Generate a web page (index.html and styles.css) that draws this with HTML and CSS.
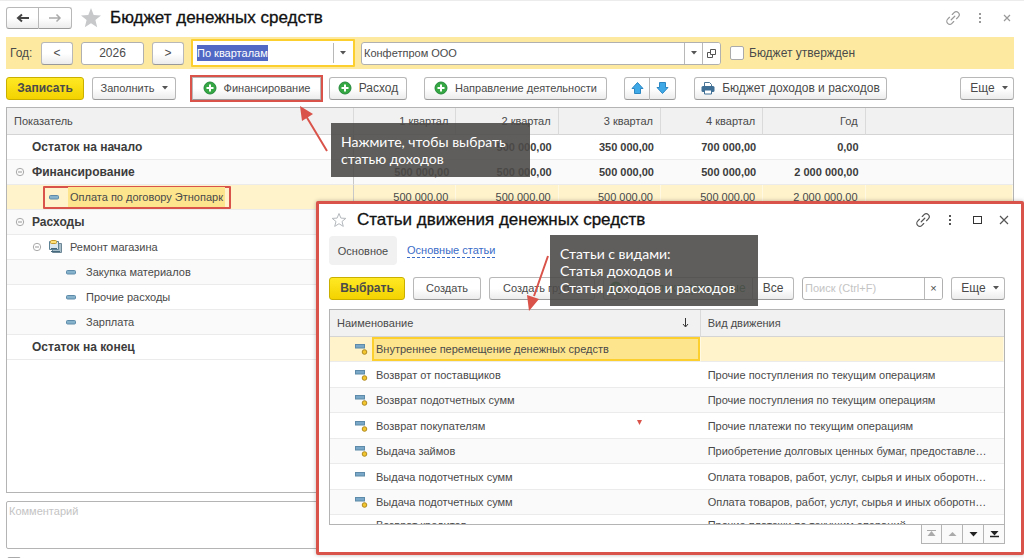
FILE: index.html
```html
<!DOCTYPE html>
<html lang="ru">
<head>
<meta charset="utf-8">
<title>Бюджет денежных средств</title>
<link rel="stylesheet" href="styles.css">
</head>
<body>
<svg class="defs" aria-hidden="true">
  <symbol id="plus" viewBox="0 0 14 14"><circle cx="7" cy="7" r="6" fill="#35a844" stroke="#24883a"/><path d="M7 3.500v7M3.500 7h7" stroke="#fff" stroke-width="2"/></symbol>
  <symbol id="link" viewBox="0 0 16 16"><g transform="rotate(-45 8 8)" fill="none" stroke="currentColor" stroke-width="1.200" stroke-linecap="round"><path d="M6 5H3.500a3 3 0 0 0 0 6H6M10 5h2.500a3 3 0 0 1 0 6H10M5.500 8h5"/></g></symbol>
  <symbol id="dots" viewBox="0 0 16 16"><path d="M7 3h2v2H7zM7 7h2v2H7zM7 11h2v2H7z" fill="currentColor"/></symbol>
  <symbol id="cross" viewBox="0 0 16 16"><path d="M4 4l8 8M12 4l-8 8" stroke="currentColor" stroke-width="1.200" fill="none"/></symbol>
  <symbol id="cross-sm" viewBox="0 0 16 16"><path d="M5 5l6 6M11 5l-6 6" stroke="currentColor" stroke-width="1.200" fill="none"/></symbol>
  <symbol id="caret" viewBox="0 0 6 4"><path d="M0 0h6L3 3.500z" fill="#555"/></symbol>
  <symbol id="fold" viewBox="0 0 10 10"><circle cx="5" cy="5" r="3.700" fill="none" stroke="#aaa"/><path d="M3 5h4" stroke="#999"/></symbol>
  <symbol id="dash" viewBox="0 0 10 12"><rect x=".5" y="4.500" width="9" height="3.500" rx="1" fill="#86b2cc" stroke="#5d8aa8"/></symbol>
  <symbol id="item" viewBox="0 0 13 12"><rect x=".5" y="1.500" width="9" height="3.500" fill="#78a7c8" stroke="#5d8aa8"/></symbol>
  <symbol id="itemdot" viewBox="0 0 13 12"><rect x=".5" y="1.500" width="9" height="3.500" fill="#78a7c8" stroke="#5d8aa8"/><circle cx="9.500" cy="9" r="2.300" fill="#f2c52e" stroke="#b08a20"/></symbol>
</svg>

<header class="head">
  <div class="nav">
    <button class="btn nav-btn" aria-label="Назад"><svg width="14" height="10" viewBox="0 0 14 10"><path d="M13 5H3M6 1.500 2 5l4 3.500" fill="none" stroke="#444" stroke-width="2"/></svg></button>
    <button class="btn nav-btn" aria-label="Вперед"><svg width="14" height="10" viewBox="0 0 14 10"><path d="M1 5h11M8.500 1.500 12 5 8.500 8.500" fill="none" stroke="#aaa" stroke-width="1.500"/></svg></button>
  </div>
  <svg class="star" viewBox="0 0 20 20"><path d="M10 0l2.700 6.900 7.300.5-5.600 4.700 1.800 7.200L10 15.300l-6.200 4 1.800-7.200L0 7.400l7.300-.5z" fill="#c6c8ca"/></svg>
  <h1 class="title">Бюджет денежных средств</h1>
  <div class="win-icons win-icons-main">
    <svg><use href="#link"/></svg><svg><use href="#dots"/></svg><svg><use href="#cross-sm"/></svg>
  </div>
</header>

<form class="params">
  <label class="year-label" for="year">Год:</label>
  <button type="button" class="btn step">&lt;</button>
  <input id="year" class="field year" value="2026">
  <button type="button" class="btn step">&gt;</button>
  <div class="combo combo-active">
    <input class="combo-input" aria-label="Период" value="По кварталам" autofocus onfocus="this.select()">
    <button type="button" class="combo-btn" aria-label="Выбрать период"><svg class="caret"><use href="#caret"/></svg></button>
  </div>
  <div class="combo company">
    <input class="combo-input" aria-label="Организация" value="Конфетпром ООО">
    <button type="button" class="combo-btn" aria-label="Выбрать организацию"><svg class="caret"><use href="#caret"/></svg></button>
    <button type="button" class="combo-btn" aria-label="Открыть"><svg width="9" height="9" viewBox="0 0 9 9"><path d="M3.500.5h5v5h-5zM3.500 3.500h-3v5h5v-3" fill="none" stroke="#555"/></svg></button>
  </div>
  <label class="check-label"><input type="checkbox" class="check">Бюджет утвержден</label>
</form>

<div class="tools">
  <button class="btn primary w-save">Записать</button>
  <button class="btn w-fill">Заполнить <svg class="caret"><use href="#caret"/></svg></button>
  <button class="btn w-fin marked"><svg class="ico"><use href="#plus"/></svg>Финансирование</button>
  <button class="btn w-exp"><svg class="ico"><use href="#plus"/></svg>Расход</button>
  <button class="btn w-dir"><svg class="ico"><use href="#plus"/></svg>Направление деятельности</button>
  <div class="pair">
    <button class="btn arrow-btn" aria-label="Вверх"><svg width="13" height="12" viewBox="0 0 13 12"><path d="M6.500.5 12 6.500H9.500v5h-6v-5H1z" fill="#3fa9e8" stroke="#2b86c2"/></svg></button>
    <button class="btn arrow-btn" aria-label="Вниз"><svg width="13" height="12" viewBox="0 0 13 12"><path d="M6.500 11.500 12 5.500H9.500v-5h-6v5H1z" fill="#3fa9e8" stroke="#2b86c2"/></svg></button>
  </div>
  <button class="btn w-rep"><svg class="ico" viewBox="0 0 14 14"><path d="M3.500 6V1.500h5l2 2V6" fill="#fff" stroke="#4b7696"/><rect x=".5" y="5" width="13" height="6" rx="1.500" fill="#3f6f94"/><path d="M3.500 9h7v4h-7z" fill="#fff" stroke="#3f6f94"/></svg>Бюджет доходов и расходов</button>
  <button class="btn more push">Еще <svg class="caret"><use href="#caret"/></svg></button>
</div>

<main class="pane">
  <table class="budget">
    <colgroup><col class="c-name"><col class="c-num"><col class="c-num"><col class="c-num"><col class="c-num"><col class="c-num"><col></colgroup>
    <thead><tr><th>Показатель</th><th>1 квартал</th><th>2 квартал</th><th>3 квартал</th><th>4 квартал</th><th>Год</th><th></th></tr></thead>
    <tbody>
      <tr class="bold"><td><div class="cell"><span class="slot"></span>Остаток на начало</div></td><td></td><td>500 000,00</td><td>350 000,00</td><td>700 000,00</td><td>0,00</td><td></td></tr>
      <tr class="bold alt"><td><div class="cell"><span class="slot"><svg class="fold"><use href="#fold"/></svg></span>Финансирование</div></td><td>500 000,00</td><td>500 000,00</td><td>500 000,00</td><td>500 000,00</td><td>2 000 000,00</td><td></td></tr>
      <tr class="current"><td><div class="cell"><span class="frame"><svg class="dash"><use href="#dash"/></svg><span class="hl">Оплата по договору Этнопарк</span></span></div></td><td>500 000,00</td><td>500 000,00</td><td>500 000,00</td><td>500 000,00</td><td>2 000 000,00</td><td></td></tr>
      <tr class="bold alt"><td><div class="cell"><span class="slot"><svg class="fold"><use href="#fold"/></svg></span>Расходы</div></td><td></td><td></td><td></td><td></td><td></td><td></td></tr>
      <tr><td><div class="cell level1"><span class="slot-sm"><svg class="fold"><use href="#fold"/></svg></span><svg class="folder" viewBox="0 0 13 14"><path d="M3.500 3.500h9v9h-9z" fill="#a9bfca" stroke="#6d8796"/><path d="M.5 1.500h9v8h-9z" fill="#dbe8ee" stroke="#5d8296"/><path d="M2 8.500h6M2 11.500h9" stroke="#47697d"/><rect x="1.500" y=".5" width="6" height="3" rx="1" fill="#ffe27a" stroke="#c59b2c"/></svg>Ремонт магазина</div></td><td></td><td></td><td></td><td></td><td></td><td></td></tr>
      <tr class="alt"><td><div class="cell level2"><svg class="dash"><use href="#dash"/></svg>Закупка материалов</div></td><td></td><td></td><td></td><td></td><td></td><td></td></tr>
      <tr><td><div class="cell level2"><svg class="dash"><use href="#dash"/></svg>Прочие расходы</div></td><td></td><td></td><td></td><td></td><td></td><td></td></tr>
      <tr class="alt"><td><div class="cell level2"><svg class="dash"><use href="#dash"/></svg>Зарплата</div></td><td></td><td></td><td></td><td></td><td></td><td></td></tr>
      <tr class="bold"><td><div class="cell"><span class="slot"></span>Остаток на конец</div></td><td></td><td></td><td></td><td></td><td></td><td></td></tr>
    </tbody>
  </table>
</main>
<textarea class="comment" aria-label="Комментарий" placeholder="Комментарий"></textarea>
<input type="checkbox" class="check tail" aria-label="Флажок">

<section class="dialog" role="dialog" aria-labelledby="dlg-title">
  <header class="dlg-head">
    <svg class="star-sm" viewBox="0 0 16 16"><path d="M8 1.500l1.900 4.600 4.900.3-3.800 3.100 1.300 4.900L8 11.700l-4.300 2.700L5 9.500 1.200 6.400l4.900-.3z" fill="none" stroke="#b4b8bc"/></svg>
    <h2 class="title" id="dlg-title">Статьи движения денежных средств</h2>
    <div class="win-icons">
      <svg><use href="#link"/></svg><svg><use href="#dots"/></svg><svg viewBox="0 0 16 16"><rect x="4.500" y="4.500" width="8" height="7" fill="none" stroke="#333"/></svg><svg><use href="#cross"/></svg>
    </div>
  </header>
  <nav class="tabs"><button class="tab">Основное</button><a class="tab-link" href="#">Основные статьи</a></nav>
  <div class="dlg-tools">
    <button class="btn primary w-pick">Выбрать</button>
    <button class="btn w-new">Создать</button>
    <button class="btn w-group">Создать группу</button>
    <button class="btn w-copy" aria-label="Скопировать"><svg class="ico"><use href="#plus"/></svg></button>
    <div class="pair filter"><button class="btn w-only">Только доступные</button><button class="btn w-all">Все</button></div>
    <div class="combo search"><input class="combo-input" aria-label="Поиск" placeholder="Поиск (Ctrl+F)"><button class="combo-btn" aria-label="Очистить">×</button></div>
    <button class="btn more">Еще <svg class="caret"><use href="#caret"/></svg></button>
  </div>
  <div class="list">
    <table class="items">
      <colgroup><col class="c-item"><col></colgroup>
      <thead><tr><th><div class="th-sort">Наименование<svg width="7" height="10" viewBox="0 0 7 10"><path d="M3.500 0v8.500M1 6l2.500 3L6 6" fill="none" stroke="#333"/></svg></div></th><th>Вид движения</th></tr></thead>
      <tbody>
        <tr class="current"><td><div class="item"><svg><use href="#itemdot"/></svg><span class="picked">Внутреннее перемещение денежных средств</span></div></td><td></td></tr>
        <tr><td><div class="item"><svg><use href="#itemdot"/></svg><span>Возврат от поставщиков</span></div></td><td>Прочие поступления по текущим операциям</td></tr>
        <tr><td><div class="item"><svg><use href="#itemdot"/></svg><span>Возврат подотчетных сумм</span></div></td><td>Прочие поступления по текущим операциям</td></tr>
        <tr><td><div class="item"><svg><use href="#itemdot"/></svg><span>Возврат покупателям</span></div></td><td>Прочие платежи по текущим операциям</td></tr>
        <tr><td><div class="item"><svg><use href="#itemdot"/></svg><span>Выдача займов</span></div></td><td>Приобретение долговых ценных бумаг, предоставле…</td></tr>
        <tr><td><div class="item"><svg><use href="#item"/></svg><span>Выдача подотчетных сумм</span></div></td><td>Оплата товаров, работ, услуг, сырья и иных оборотн…</td></tr>
        <tr><td><div class="item"><svg><use href="#itemdot"/></svg><span>Выдача подотчетных сумм</span></div></td><td>Оплата товаров, работ, услуг, сырья и иных оборотн…</td></tr>
        <tr class="next"><td><div class="item"><span>Возврат кредитов</span></div></td><td>Прочие платежи по текущим операций</td></tr>
      </tbody>
    </table>
  </div>
  <div class="pager">
    <button aria-label="В начало"><svg width="9" height="8" viewBox="0 0 9 8"><path d="M0 .5h9" stroke="#aaa"/><path d="M4.500 1 8.500 6h-8z" fill="#aaa"/></svg></button>
    <button aria-label="Выше"><svg width="9" height="8" viewBox="0 0 9 8"><path d="M4.500 2 8.500 6h-8z" fill="#aaa"/></svg></button>
    <button aria-label="Ниже"><svg width="9" height="8" viewBox="0 0 9 8"><path d="M4.500 6.500 8.500 2h-8z" fill="#222"/></svg></button>
    <button aria-label="В конец"><svg width="9" height="8" viewBox="0 0 9 8"><path d="M4.500 5.500 8.500 1h-8z" fill="#222"/><path d="M0 6.500h9" stroke="#222" stroke-width="1.500"/></svg></button>
  </div>
</section>

<svg class="marks" aria-hidden="true">
  <path d="M327 151 306 116M548 256 534 296" stroke="#d9534a" stroke-width="2"/>
  <path d="M300 106 313 114 302 121zM529 311 527 295 539 299z" fill="#d9534a"/>
  <path d="M637 420h5l-2.500 5z" fill="#d9534a"/>
</svg>
<aside class="note note-a">Нажмите, чтобы выбрать<br>статью доходов</aside>
<aside class="note note-b">Статьи с видами:<br>Статья доходов и<br>Статья доходов и расходов</aside>
</body>
</html>
```
FILE: styles.css
```css
* { box-sizing: border-box; }

body {
  margin: 0;
  height: 100vh;
  overflow: hidden;
  display: flex;
  flex-direction: column;
  padding: 0 10px 0 6px;
  border-top: 1px solid #ececec;
  background: #fff;
  color: #4a4a4a;
  font: 12px/16px "Liberation Sans", Arial, sans-serif;
}

button, input, textarea { font: inherit; color: inherit; }
.defs { position: absolute; width: 0; height: 0; }

.btn {
  display: inline-flex;
  align-items: center;
  justify-content: center;
  gap: 7px;
  height: 23px;
  padding: 0;
  flex: none;
  border: 1px solid #b8b8b8;
  border-bottom-color: #999;
  border-radius: 3px;
  background: linear-gradient(#fff 50%, #ececec);
  white-space: nowrap;
}
.primary {
  border-color: #c9b000;
  background: linear-gradient(#ffe924, #f3d200);
  font-weight: bold;
}
.caret { width: 6px; height: 4px; }
.ico { width: 14px; height: 14px; }

/* Window header */
.head { display: flex; align-items: center; height: 36px; flex: none; padding-bottom: 2px; }
.nav { display: flex; }
.nav-btn { width: 33px; height: 22px; }
.nav-btn:first-child, .pair .btn:first-child { border-radius: 3px 0 0 3px; }
.nav-btn:last-child, .pair .btn:last-child { border-left: 0; border-radius: 0 3px 3px 0; }
.star { width: 20px; height: 20px; margin: 0 9px; }
.title { margin: 0; color: #111; font: 500 17px/22px "Liberation Sans", Arial, sans-serif; -webkit-text-stroke: 0.3px #111; }
.win-icons { display: flex; gap: 11px; margin-left: auto; color: #555; }
.win-icons svg { width: 16px; height: 16px; }
.win-icons-main { color: #999; margin-right: -1px; }

/* Parameters */
.params { display: flex; align-items: center; height: 32px; flex: none; padding-left: 4px; background: #fdeaa0; }
.year-label { width: 31px; }
.step { width: 32px; }
.field, .combo { height: 23px; border: 1px solid #b0b0b0; border-radius: 3px; background: #fff; font-size: 11px; }
.year { width: 63px; margin: 0 8px; text-align: center; font-size: 12px; }
.combo { display: flex; overflow: hidden; }
.combo-input { flex: 1; min-width: 0; border: 0; padding: 0 2px; background: none; outline: 0; }
.combo-input::placeholder, .comment::placeholder { color: #c4c4c4; opacity: 1; }
.combo-input::selection { background: #5068c4fd; color: #fff; }
.combo-btn { width: 18px; padding: 0; border: 0; border-left: 1px solid #b8b8b8; background: #fff; display: flex; align-items: center; justify-content: center; }
.combo-active { width: 164px; height: 28px; margin: 0 6px 0 7px; padding: 2px; border: 2px solid #fccf2e; border-radius: 1px; }
.company { width: 360px; }
.check-label { display: flex; align-items: center; gap: 5px; margin-left: 9px; }
.check { appearance: none; width: 14px; height: 14px; margin: 0; flex: none; border: 1px solid #aaa; border-radius: 2px; background: #fff; }

/* Command bar */
.tools { display: flex; align-items: center; height: 38px; flex: none; }
.w-save { width: 78px; margin-right: 8px; }
.w-fill { width: 84px; margin-right: 16px; }
.w-fin { width: 129px; margin-right: 8px; }
.marked { border-radius: 0; outline: 2px solid #d9534a; }
.w-exp { width: 78px; margin-right: 17px; }
.w-dir { width: 183px; margin-right: 17px; }
.w-fill, .w-fin, .w-dir, .w-new, .w-group { font-size: 11px; }
.pair { display: flex; }
.arrow-btn { width: 26px; }
.w-rep { width: 193px; margin-left: 18px; }
.more { width: 54px; padding-left: 4px; }
.push { margin-left: auto; }

/* Budget table */
.pane { flex: 1; min-height: 0; overflow: hidden; border: 1px solid #b4b4b4; }
table { width: 100%; border-collapse: separate; border-spacing: 0; table-layout: fixed; font-size: 11px; }
th { font-weight: normal; background: #f1f1f1; border-bottom: 1px solid #d4d4d4; border-right: 1px solid #dadada; }
th:last-child, td:last-child { border-right: 0; }
td { overflow: hidden; white-space: nowrap; text-overflow: ellipsis; border-bottom: 1px solid #ebebeb; }
.c-name { width: 34.5%; }
.c-num { width: 10.17%; }
.budget th { height: 27px; padding: 0 7px; text-align: right; }
.budget th:first-child { text-align: left; }
.budget td { height: 25px; padding: 0 7px; text-align: right; }
.budget td:first-child { padding: 0; text-align: left; border-right: 1px solid #c8c8c8; }
.bold { font-weight: bold; color: #3c3c3c; }
.bold .cell { font-size: 12px; }
.alt td { background: #fafafa; }
.current td { background: #fef3cb; border-right: 1px solid #fff9e4; }
.cell { display: flex; align-items: center; height: 24px; }
.slot { width: 25px; padding-left: 8px; display: flex; }
.slot-sm { width: 17px; display: flex; }
.fold { width: 10px; height: 10px; }
.dash { width: 10px; height: 12px; flex: none; }
.level1 { padding-left: 25px; }
.folder { width: 13px; height: 14px; margin-right: 8px; }
.level2 { padding-left: 59px; gap: 10px; }
.frame { display: flex; align-items: center; gap: 9px; height: 23px; margin-left: 36px; padding: 0 4px; border: 2px solid #d9534a; border-radius: 1px; }
.hl { padding: 2px; background: #fde58e; }

.comment { display: block; flex: none; height: 48px; margin: 8px 0; padding: 1px 2px; resize: none; border: 1px solid #b4b4b4; border-radius: 2px; font-size: 11px; }
.tail { height: 14px; margin: 0 0 -13px 1px; }

/* Dialog */
.dialog { position: absolute; left: 316px; right: 0; top: 201px; bottom: 3px; display: flex; flex-direction: column; padding: 0 16px 8px 10px; border: 3px solid #d9534a; border-radius: 2px; background: #fff; box-shadow: 0 0 4px #0004; }
.dlg-head { display: flex; align-items: center; height: 32px; flex: none; gap: 8px; margin-right: -7px; }
.star-sm { width: 20px; height: 16px; }
.tabs { display: flex; align-items: center; gap: 10px; flex: none; }
.tab { width: 68px; height: 29px; padding: 0; border: 0; border-radius: 4px; background: #f1f1f1; font-size: 11px; }
.tab-link { color: #3a6cc8; text-decoration: none; font-size: 11px; line-height: 14px; border-bottom: 1px dashed #3a6cc8; }
.dlg-tools { display: flex; align-items: center; height: 44px; flex: none; gap: 8px; padding-top: 2px; }
.w-pick { width: 76px; }
.w-new { width: 68px; }
.w-group { width: 106px; }
.w-copy { width: 26px; }
.w-only { width: 116px; color: #2f8a4a; }
.w-all { width: 41px; }
.search { flex: 1; font-size: 11px; }
.list { flex: 1; min-height: 0; overflow: hidden; border: 1px solid #b4b4b4; }
.c-item { width: 55%; }
.items th { height: 27px; padding: 0 7px; text-align: left; }
.th-sort { display: flex; align-items: center; justify-content: space-between; padding-right: 4px; }
.items td { height: 25px; padding: 0 7px; }
.items tr:nth-child(even) td { height: 26px; }
.items tr:nth-child(odd):not(.current) td { background: #fafafa; }
.items td:first-child { padding: 0; }
.item { display: flex; align-items: center; height: 24px; padding-left: 25px; gap: 4px; }
.item svg { width: 13px; height: 12px; flex: none; }
.item span { padding-left: 4px; }
.item .picked { flex: 1; height: 24px; padding-left: 2px; border: 2px solid #fccf2e; background: #fde58e; line-height: 20px; }
.next td { vertical-align: top; line-height: 20px; }
.next .item { height: 20px; padding-left: 42px; }
.pager { display: flex; justify-content: flex-end; flex: none; }
.pager button { width: 21px; height: 19px; padding: 0; border: 1px solid #b4b4b4; border-top: 0; border-left-width: 0; background: #fafafa; display: flex; align-items: center; justify-content: center; }
.pager button:first-child { border-left-width: 1px; }

/* Callouts over the windows */
.marks { position: absolute; left: 0; top: 0; width: 100%; height: 100%; pointer-events: none; }
.note { position: absolute; padding: 10px; background: #4c4a48e3; color: #fff; font: 14px/17px Lato, "Open Sans", sans-serif; white-space: nowrap; }
.note-a { left: 331px; top: 123px; width: 199px; height: 54px; }
.note-b { left: 550px; top: 235px; width: 208px; height: 71px; }
```
